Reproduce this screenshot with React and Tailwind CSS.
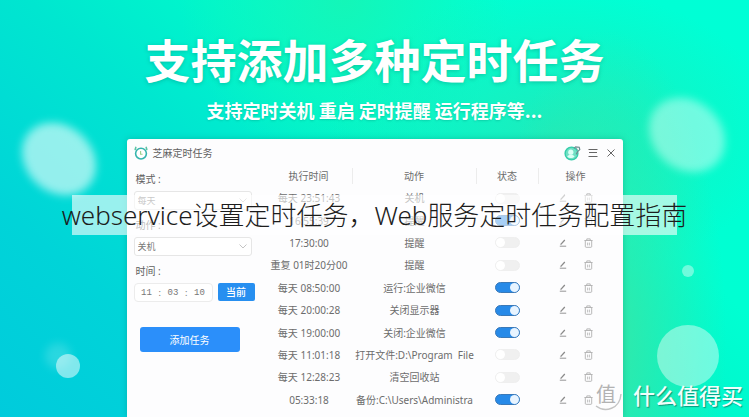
const MODES = ["每天", "每周", "单次"];
const ACTIONS = ["关机", "重启", "提醒"];

const TASKS = [
  { time: "每天 23:51:43", action: "关机", on: false },
  { time: "16:55:39", action: "提醒", on: true },
  { time: "17:30:00", action: "提醒", on: false },
  { time: "重复 01时20分00", action: "提醒", on: false },
  { time: "每天 08:50:00", action: "运行:企业微信", on: true },
  { time: "每天 20:00:28", action: "关闭显示器", on: true },
  { time: "每天 19:00:00", action: "关闭:企业微信", on: true },
  { time: "每天 11:01:18", action: "打开文件:D:\\Program  File", on: false },
  { time: "每天 12:28:23", action: "清空回收站", on: false },
  { time: "05:33:18", action: "备份:C:\\Users\\Administra", on: true },
];

function Bubbles() {
  return (
    <svg
      className="absolute inset-0 h-full w-full"
      viewBox="0 0 749 417"
      preserveAspectRatio="xMidYMid slice"
      aria-hidden="true"
    >
      <defs>
        <filter id="soft" x="-30%" y="-30%" width="160%" height="160%">
          <feGaussianBlur stdDeviation="4" />
        </filter>
      </defs>
      <g fill="#fff">
        <ellipse cx="59" cy="159" rx="40" ry="33" transform="rotate(42 59 159)" opacity="0.58" filter="url(#soft)" />
        <ellipse cx="687" cy="135" rx="41" ry="34" transform="rotate(42 687 135)" opacity="0.42" filter="url(#soft)" />
        <circle cx="58" cy="356" r="13" opacity="0.16" filter="url(#soft)" />
        <circle cx="68" cy="366" r="12" opacity="0.5" />
        <circle cx="688" cy="271" r="6" opacity="0.4" />
        <circle cx="688" cy="356" r="31" opacity="0.42" />
      </g>
    </svg>
  );
}

function ClockLogo() {
  return (
    <svg className="h-[14px] w-[14px]" viewBox="0 0 14 14" fill="none" aria-hidden="true">
      <path d="M1.2 3.4 1.8 1.4M12.8 3.4l-.6-2" stroke="#5cc4a4" strokeWidth="1.6" strokeLinecap="round" />
      <circle cx="7" cy="7.6" r="5.4" fill="#fff" stroke="#36b5ae" strokeWidth="1.6" />
      <path d="M6.6 5v3.2h2" stroke="#9ccf8a" strokeWidth="1.1" />
    </svg>
  );
}

function Avatar() {
  return (
    <svg className="h-4 w-[17px]" viewBox="0 0 17 16" fill="none" aria-hidden="true">
      <circle cx="7.5" cy="8.5" r="6.4" fill="#6fe0c4" stroke="#35cdaa" strokeWidth="1.4" />
      <circle cx="6.8" cy="7.2" r="2.6" fill="#dcfff5" />
      <path d="M3.2 11.6c1.4-2.4 6-2.4 7.4 0-1.8 2-5.6 2-7.4 0Z" fill="#dcfff5" />
      <path d="M10 3.4 11.6 1.8l3.6.4.6 2.4-2 1.8-1.6 3" stroke="#6d8c90" strokeWidth="1.2" />
      <path d="m12.2 3.6 1.4.8" stroke="#6d8c90" />
    </svg>
  );
}

function PencilIcon() {
  return (
    <svg className="h-2 w-2" viewBox="0 0 8 8" fill="none" stroke="#8a8a8a" aria-hidden="true">
      <path d="M1.6 5.6 5.8 1" strokeWidth="1.3" />
      <path d="M.8 7.2h6.4" strokeWidth="0.9" />
    </svg>
  );
}

function TrashIcon() {
  return (
    <svg className="h-[10px] w-[9px]" viewBox="0 0 9 10" fill="none" stroke="#b0b0b0" aria-hidden="true">
      <path d="M.4 2.5h8.2M2.8 2.3V.9h3.4v1.4M1.3 2.6v5.9c0 .5.3.8.8.8h4.8c.5 0 .8-.3.8-.8V2.6" strokeWidth="0.9" />
      <path d="M3.6 4.6v2.8M5.4 4.6v2.8" strokeWidth="0.8" />
    </svg>
  );
}

function SelectField({ id, label, options }) {
  return (
    <div className="flex flex-col gap-[6px]">
      <label htmlFor={id} className="pl-[2px] leading-3">{label} :</label>
      <div className="relative">
        <select
          id={id}
          className="block h-[19px] w-full appearance-none rounded-[3px] border border-[#e6e6e6] bg-white pl-[3px] text-[9px] leading-3 text-[#777] outline-none"
        >
          {options.map((o) => (
            <option key={o}>{o}</option>
          ))}
        </select>
        <svg className="pointer-events-none absolute top-[7px] right-[5px] h-[5px] w-2" viewBox="0 0 8 5" fill="none" aria-hidden="true">
          <path d="m.5.5 3.5 3.5L7.5.5" stroke="#c4c4c4" />
        </svg>
      </div>
    </div>
  );
}

function TimeInput({ label, value }) {
  return (
    <input
      aria-label={label}
      defaultValue={value}
      className="w-4 bg-transparent text-center font-['Liberation_Mono',monospace] text-[9px] text-[#777] outline-none"
    />
  );
}

function TaskForm() {
  return (
    <form className="flex w-[128px] shrink-0 flex-col gap-[9px] pt-[9px] pl-[7px]" onSubmit={(e) => e.preventDefault()}>
      <div className="flex w-[118px] flex-col gap-[9px]">
        <SelectField id="mode" label="模式" options={MODES} />
        <SelectField id="action" label="动作" options={ACTIONS} />
      </div>
      <fieldset className="flex flex-col">
        <legend className="mb-[6px] pl-[2px] leading-3">时间 :</legend>
        <div className="flex gap-[5px]">
          <div className="flex h-[19px] w-[79px] items-center justify-between rounded-[4px] border border-[#ececec] bg-white px-1 text-[9px] text-[#777]">
            <TimeInput label="时" value="11" />
            <span>:</span>
            <TimeInput label="分" value="03" />
            <span>:</span>
            <TimeInput label="秒" value="10" />
          </div>
          <button type="button" className="h-[18px] w-[37px] rounded-[2px] bg-[#278ff0] text-[10px] leading-3 font-medium text-white">
            当前
          </button>
        </div>
      </fieldset>
      <button type="submit" className="mt-4 ml-[6px] h-[25px] w-[100px] rounded-[3px] bg-[#2b8ffa] text-[10px] leading-3 text-white">
        添加任务
      </button>
    </form>
  );
}

function HeadCell({ children, last }) {
  return (
    <th scope="col" className="p-0 font-normal">
      <div className={last ? "leading-4" : "border-r border-[#ececec] leading-4"}>{children}</div>
    </th>
  );
}

function TaskTable() {
  return (
    <table className="ml-[11px] h-[247px] w-[347px] table-fixed border-collapse text-center text-[#6c6c6c]">
      <colgroup>
        <col className="w-[87px]" />
        <col className="w-[124px]" />
        <col className="w-[62px]" />
        <col className="w-[74px]" />
      </colgroup>
      <thead>
        <tr className="h-[23px]">
          <HeadCell>执行时间</HeadCell>
          <HeadCell>动作</HeadCell>
          <HeadCell>状态</HeadCell>
          <HeadCell last>操作</HeadCell>
        </tr>
      </thead>
      <tbody>
        {TASKS.map((t) => (
          <tr key={t.time}>
            <td className="p-0 whitespace-nowrap">{t.time}</td>
            <td className="overflow-hidden p-0 whitespace-pre">{t.action}</td>
            <td className="p-0">
              <input
                type="checkbox"
                aria-label={`启用 ${t.time}`}
                defaultChecked={t.on}
                className="mx-auto flex h-[11px] w-[25px] appearance-none items-center rounded-full border border-[#efefef] bg-[#f0f0f0] before:h-[9px] before:w-[9px] before:rounded-full before:bg-white checked:justify-end checked:border-[#3a79b8] checked:bg-[#278ae8] checked:before:bg-[#e8f4ff]"
              />
            </td>
            <td className="p-0">
              <div className="flex items-center justify-center gap-[17px]">
                <button type="button" aria-label="编辑"><PencilIcon /></button>
                <button type="button" aria-label="删除"><TrashIcon /></button>
              </div>
            </td>
          </tr>
        ))}
      </tbody>
    </table>
  );
}

function AppWindow() {
  return (
    <section className="mx-auto w-[496px] grow rounded-t-[3px] bg-[#fdfdfe] font-['Noto_Sans','Noto_Sans_CJK_SC',sans-serif] text-[10px] leading-3 text-[#606060] shadow-[0_0_6px_rgba(0,130,110,0.35)]">
      <header className="flex h-[25px] items-center pt-[2px] pr-2 pl-[7px]">
        <ClockLogo />
        <span className="ml-[5px]">芝麻定时任务</span>
        <div className="ml-auto flex items-center gap-[7px]">
          <Avatar />
          <button type="button" aria-label="菜单">
            <svg className="h-[10px] w-[10px]" viewBox="0 0 10 10" stroke="#666" aria-hidden="true">
              <path d="M.5 1.5h9M1 4.5h8M.5 8.5h9" />
            </svg>
          </button>
          <button type="button" aria-label="关闭" className="ml-[2px]">
            <svg className="h-2 w-2" viewBox="0 0 8 8" stroke="#666" aria-hidden="true">
              <path d="m.5.5 7 7M7.5.5l-7 7" />
            </svg>
          </button>
        </div>
      </header>
      <div className="flex items-start">
        <TaskForm />
        <TaskTable />
      </div>
    </section>
  );
}

function Watermark() {
  return (
    <div className="absolute right-[6px] bottom-2 flex items-center gap-3 font-['Noto_Sans_CJK_SC',sans-serif]">
      <span className="relative flex h-[30px] w-[30px] items-center justify-center text-[20px] leading-none text-[#b2b2b2]">
        值
        <svg className="absolute inset-0 h-full w-full overflow-visible" viewBox="0 0 30 30" fill="none" aria-hidden="true">
          <path d="M5 27c9 7 24 3 25-12" stroke="#c4c4c4" strokeWidth="1.4" />
        </svg>
      </span>
      <span className="text-[22px] leading-[30px] font-medium text-[#effffb] [text-shadow:1px_1px_1px_rgba(0,80,70,0.55)]">
        什么值得买
      </span>
    </div>
  );
}

export default function App() {
  return (
    <main className="relative flex h-screen flex-col overflow-hidden bg-[radial-gradient(ellipse_16%_75%_at_81%_82%,#35e8a8_0%,transparent_100%),radial-gradient(ellipse_30%_35%_at_74%_32%,#1cecbc_0%,transparent_100%),radial-gradient(ellipse_22%_40%_at_46%_0%,#14f6b8_0%,transparent_100%),linear-gradient(40deg,#00cbdc_0%,#00d4d8_20%,#00e6d0_42%,#00f6cc_56%,#00ffd2_70%,#00ffd6_100%)]">
      <Bubbles />
      <div className="relative flex grow flex-col">
        <div className="flex flex-col items-center pt-[30px] pb-4 font-['Noto_Sans_CJK_SC',sans-serif] font-bold text-white">
          <h1 className="text-[46px] leading-[56px] [text-shadow:0_1px_4px_rgba(0,130,110,0.4)]">支持添加多种定时任务</h1>
          <p className="mt-3 text-[18px] leading-[25px] [text-shadow:0_1px_2px_rgba(0,130,110,0.3)]">
            支持定时关机 重启 定时提醒 运行程序等...
          </p>
        </div>
        <AppWindow />
      </div>
      <Watermark />
      {/* caption strip */}
      <div className="absolute inset-x-[72px] top-[195px] flex h-10 items-center justify-center bg-white/60">
        <h2 className="shrink-0 font-['Noto_Sans','Noto_Sans_CJK_SC',sans-serif] text-[26px] leading-10 font-light whitespace-nowrap text-[#1c1c1c]">
          webservice设置定时任务，Web服务定时任务配置指南
        </h2>
      </div>
    </main>
  );
}
